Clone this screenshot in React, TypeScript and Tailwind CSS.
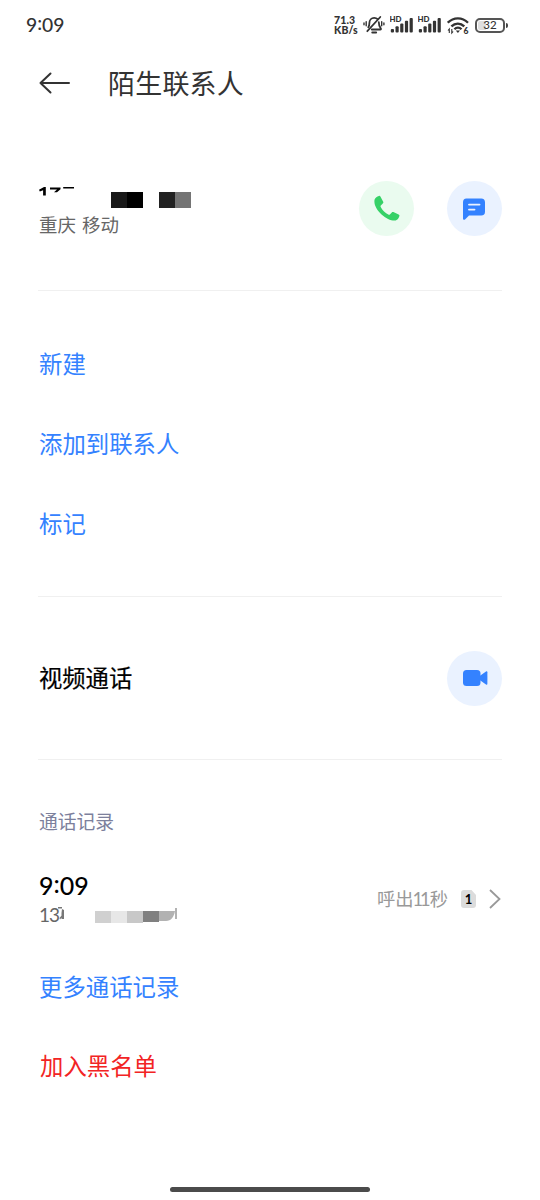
import type { ReactNode } from "react";

const blueActions = ["新建", "添加到联系人", "标记"];

function Time({ className }: { className: string }) {
    return (
        <span className={`flex leading-none whitespace-nowrap ${className}`}>
            9<span className="relative -top-[0.08em]">:</span>09
        </span>
    );
}

function Signal() {
    return (
        <svg width="25" height="18" viewBox="0 0 25 18" fill="#333">
            <text x="-0.5" y="6" fontSize="7.5" fontWeight="900" textLength="12" lengthAdjust="spacingAndGlyphs">HD</text>
            <rect x="0.8" y="13" width="3.2" height="3.5" rx="1" />
            <rect x="5.5" y="10.3" width="3.2" height="6.2" rx="1" />
            <rect x="10.2" y="7.5" width="3.2" height="9" rx="1" />
            <rect x="14.9" y="4.7" width="3.2" height="11.8" rx="1" />
            <rect x="19.6" y="2" width="3.2" height="14.5" rx="1" />
        </svg>
    );
}

function StatusBar() {
    return (
        <div className="flex h-[50px] items-center justify-between pr-[32px] pl-[26px] text-[#333]">
            <Time className="-mt-px text-[19.3px] font-medium" />
            <div className="flex h-[22px] items-center">
                <div className="mr-[4px] flex w-[25px] flex-col gap-[1px] text-[10.5px] leading-[9px] font-black tracking-[0.1px] whitespace-nowrap">
                    <div>71.3</div>
                    <div>KB/s</div>
                </div>
                {/* Muted bell */}
                <svg className="mr-[5px]" width="22" height="20" viewBox="0 0 22 20" fill="none" stroke="#333" strokeWidth="1.8" strokeLinecap="round" strokeLinejoin="round">
                    <path d="M5.3 12.2c.8-1 1.1-2 1.1-4.3 0-3 2-5 4.8-5 1.4 0 2.6.5 3.4 1.3M15.8 7.2c0 3.6.6 4.4 2 6.3.4.6.1 1-.5 1H8.8" />
                    <path d="M17.3 2 4.3 16.2" />
                    <path d="M9.3 17.6h3.8" strokeWidth="2" />
                    <path d="M3.2 6.8v4M1 8v1.7M18.7 6.8v4M20.9 8v1.7" strokeWidth="1.4" />
                </svg>
                <div className="mr-[3px]"><Signal /></div>
                <div className="mr-[4px]"><Signal /></div>
                {/* Wi-Fi 6 */}
                <svg className="mr-[6px]" width="22" height="19" viewBox="0 0 22 19" fill="none" stroke="#333" strokeWidth="2.3">
                    <path d="M.8 6.7c5.7-5.8 14.5-5.8 20.2 0M4.4 10.4c3.8-3.8 9.1-3.8 12.9 0" />
                    <path d="M7.4 13.3c2.1-2.1 5-2.1 7.1 0" />
                    <path d="m8.8 14.5 2.1 2.5 2.1-2.5z" fill="#333" stroke="none" />
                    <path d="M2.3 17v-4L1 14.5M4.8 13v4l1.3-1.5" strokeWidth="1.1" />
                    <text x="16.6" y="17.6" fontSize="8.5" fontWeight="900" fill="#333" stroke="none">6</text>
                </svg>
                {/* Battery */}
                <div className="relative flex h-[15px] w-[30px] items-center justify-center rounded-[5px] border-2 border-[#555]">
                    <div className="absolute top-px bottom-px left-px w-[8px] rounded-l-[2px] bg-[#dedede]" />
                    <span className="relative text-[11.5px] leading-none font-medium">32</span>
                </div>
                <div className="ml-px h-[5px] w-[2px] rounded-r bg-[#444]" />
            </div>
        </div>
    );
}

function RoundButton({ label, className, children }: { label: string; className: string; children: ReactNode }) {
    return (
        <button aria-label={label} className={`flex size-[55px] items-center justify-center rounded-full ${className}`}>
            {children}
        </button>
    );
}

function Divider() {
    return <div className="-ml-px h-px bg-[#f0f0f0]" />;
}

export default function App() {
    return (
        <div className="flex h-[1200px] w-[540px] flex-col overflow-hidden bg-white font-['Lato','Noto_Sans_CJK_SC',sans-serif] text-black">
            <StatusBar />

            <header className="flex h-[67px] items-center pl-[39px] text-[#333]">
                <svg className="-mt-px" width="32" height="22" viewBox="0 0 32 22" fill="none" stroke="#333" strokeWidth="2" strokeLinecap="round" strokeLinejoin="round">
                    <path d="M30 11H1.5M11.5 1.5 1.5 11l10 9.5" />
                </svg>
                <h1 className="ml-[37px] text-[27px] leading-none tracking-[0.2px]">陌生联系人</h1>
            </header>

            <main className="pr-[38.5px] pl-[39px]">
                {/* Number and quick actions */}
                <section className="flex h-[173px] items-start pt-[64px]">
                    <div className="flex-1">
                        <svg width="154" height="30" viewBox="0 0 154 30">
                            <path d="M0 8.8 5 6h1.8v8.5H4.1V9.2L.8 10.6zM11 6.5h10.5v1.7L18 11.3h-3l3-2.8h-7zM24.2 6H35v1.6H24.2z" />
                            <path fill="#191919" d="M72 11h16v16H72z" />
                            <path d="M88 11h16v16H88z" />
                            <path fill="#222" d="M120 11h16v16h-16z" />
                            <path fill="#747474" d="M136 11h16v16h-16z" />
                        </svg>
                        <p className="mt-[4px] text-[18.5px] leading-[20px] text-[#666]">重庆<span className="ml-[6px]">移动</span></p>
                    </div>
                    <RoundButton label="拨打电话" className="mr-[33px] bg-[#eafbef]">
                        <svg width="27" height="27" viewBox="0 0 27 27" fill="#36d167">
                            <path d="M1.6 4.5C2.4 2.7 4 1.4 5.9.9c.7-.2 1.2.1 1.5.7l2.8 5.1c.3.6.2 1.1-.2 1.6L7.8 10.6c-.3.4-.4.8-.1 1.3 1.9 3.5 4.4 6 8 7.8.5.3.9.2 1.2-.2l1.9-2.1c.4-.5 1-.6 1.6-.3l5.2 2.4c.7.3 1 .9.8 1.6-.6 2.3-1.9 3.9-3.7 4.4C15 27-.6 14.3 1.6 4.5z" />
                        </svg>
                    </RoundButton>
                    <RoundButton label="发送信息" className="bg-[#eaf2ff]">
                        <svg width="24" height="24" viewBox="0 0 24 24">
                            <path fill="#3482ff" d="M4.5 1.5h14.7a3.8 3.8 0 0 1 3.8 3.8v9.5a3.8 3.8 0 0 1-3.8 3.8H7L3 22.4c-.8.8-2 .4-2-.8V5.2a3.7 3.7 0 0 1 3.5-3.7z" />
                            <path stroke="#eaf2ff" strokeWidth="1.9" strokeLinecap="round" d="M7 7.6h10.5M7 12.6h5.5" />
                        </svg>
                    </RoundButton>
                </section>
                <Divider />

                <section className="flex h-[305px] flex-col pt-[34px] text-[23.4px] text-[#3482ff]">
                    {blueActions.map((action) => (
                        <button key={action} className="flex h-[80px] items-center text-left leading-none">
                            {action}
                        </button>
                    ))}
                </section>
                <Divider />

                <section className="flex h-[162px] items-center justify-between">
                    <span className="pt-[2px] text-[23.3px] leading-none [-webkit-text-stroke:0.2px_black]">视频通话</span>
                    <RoundButton label="视频通话" className="bg-[#eaf2ff]">
                        <svg className="ml-[2px]" width="26" height="18" viewBox="0 0 26 18" fill="#3482ff">
                            <rect x="1" y="1" width="17.5" height="16" rx="3.5" />
                            <path d="m18 6.8 6-4.3c.8-.5 1.4-.2 1.4.7v11.6c0 .9-.6 1.2-1.4.7l-6-4.3z" />
                        </svg>
                    </RoundButton>
                </section>
                <Divider />

                <section>
                    <h2 className="mt-[52px] h-[20px] text-[18.8px] leading-[20px] text-[#7c809c]">通话记录</h2>

                    <div className="mt-[41px] flex h-[52px] items-center">
                        <div className="flex-1">
                            <Time className="-mt-px text-[25px] font-medium" />
                            <div className="mt-[6px] flex h-[20px] items-center text-[19px] leading-none text-[#666]">
                                <span className="w-[19px] tracking-[-1px]">13</span>
                                {/* Masked digits */}
                                <svg width="122" height="20" viewBox="19 -1 122 20">
                                    <path fill="#777" d="M19 2h4v1.4h-4zM23 4l2 1v9h-2.5V8zM20.5 13l2.5-3v2l-2 2.5z" />
                                    <path fill="#d0d0d0" d="M56 6h16v12H56z" />
                                    <path fill="#e7e7e7" d="M72 6h16v12H72z" />
                                    <path fill="#c8c8c8" d="M88 6h16v12H88z" />
                                    <path fill="#808080" d="M104 6h16v11h-16z" />
                                    <path fill="#b2b2b2" d="M120 6h16c-1 6-4 10-9 10h-7zM136 3h2v11h-2z" />
                                </svg>
                            </div>
                        </div>
                        <span className="text-[18.3px] leading-none text-[#999]">
                            呼出<span className="mr-[2px] -ml-px tracking-[-3px]">11</span>秒
                        </span>
                        {/* SIM slot */}
                        <div className="ml-[13px] flex h-[18px] w-[15px] items-center justify-center rounded-[3px] bg-[#dcdcdc] text-[13px] leading-none font-bold [clip-path:polygon(0_0,70%_0,100%_28%,100%_100%,0_100%)]">
                            1
                        </div>
                        <svg className="mr-[0.5px] ml-[13px]" width="12" height="20" viewBox="0 0 12 20" fill="none" stroke="#999" strokeWidth="1.8">
                            <path d="m1 1 9.5 9L1 19" />
                        </svg>
                    </div>

                    <button className="mt-[23px] flex h-[80px] items-center text-[23.4px] leading-none text-[#3482ff]">更多通话记录</button>
                    <button className="ml-px flex h-[78px] items-center text-[23.4px] leading-none text-[#f22424]">加入黑名单</button>
                </section>
            </main>

            <div className="mx-auto mt-auto mb-[8px] h-[5px] w-[200px] shrink-0 rounded-full bg-[#4b4b4b]" />
        </div>
    );
}
